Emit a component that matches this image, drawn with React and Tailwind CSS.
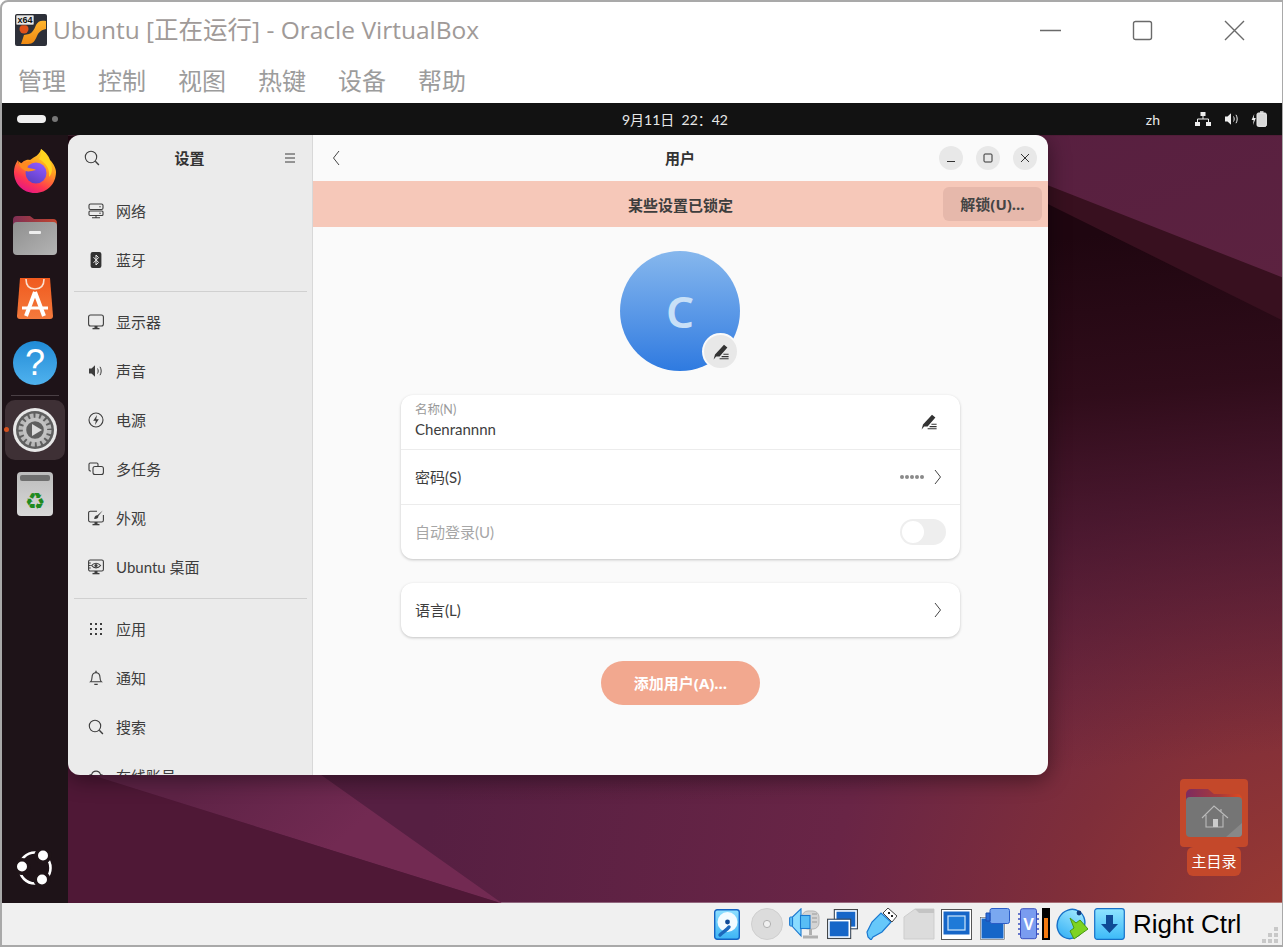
import React from 'react';

const ui = "font-['Lato','Noto_Sans_CJK_SC',sans-serif]";
const strong = "font-['Noto_Sans','Noto_Sans_CJK_SC',sans-serif]";

// gnome style symbolic icons, 16x16
const Sym = ({ children, className = '' }) => (
  <svg viewBox="0 0 16 16" fill="none" stroke="#3d3d3d" strokeWidth="1.1" className={`w-4 h-4 shrink-0 ${className}`}>
    {children}
  </svg>
);

const NetworkIcon = () => (
  <Sym>
    <rect x="1" y="1" width="14" height="5.5" rx="1.5" />
    <rect x="1" y="8" width="14" height="4.5" rx="1" />
    <path d="M8 12.5v2M4 14.8h8" />
    <circle cx="12" cy="3.8" r=".7" fill="#3d3d3d" stroke="none" />
    <circle cx="12" cy="10.2" r=".7" fill="#3d3d3d" stroke="none" />
  </Sym>
);
const BluetoothIcon = () => (
  <Sym>
    <rect x="2.6" y="0" width="10.8" height="16" rx="2" fill="#333" stroke="none" />
    <path d="M5.5 5.2 10.5 10.4 8 13V3l2.5 2.6L5.5 10.8" stroke="#eee" strokeWidth="1" />
  </Sym>
);
const DisplayIcon = () => (
  <Sym>
    <rect x=".6" y="1" width="14.8" height="11" rx="2" />
    <path d="M4.5 14.6h7" strokeWidth="1.4" />
    <path d="M6.5 12h3v2h-3z" fill="#3d3d3d" stroke="none" />
  </Sym>
);
const SoundIcon = ({ color = '#3d3d3d' }) => (
  <svg viewBox="0 0 16 16" fill="none" stroke={color} className="w-4 h-4 shrink-0">
    <path d="M1 5.5h2.5L7 2.2v11.6L3.5 10.5H1z" fill={color} stroke="none" />
    <path d="M9.5 5.5c.9 1.5.9 3.5 0 5M12 3.8c1.6 2.5 1.6 5.9 0 8.4" strokeWidth="1" />
  </svg>
);
const PowerIcon = () => (
  <Sym>
    <circle cx="8" cy="8" r="7" />
    <path d="M9 3 5.2 8.8h2.6L7 13l3.8-5.8H8.2z" fill="#3d3d3d" stroke="none" />
  </Sym>
);
const MultitaskIcon = () => (
  <Sym>
    <path d="M3 10H2.2A1.2 1.2 0 0 1 1 8.8V3.2A1.2 1.2 0 0 1 2.2 2h6.6A1.2 1.2 0 0 1 10 3.2V5" />
    <rect x="5" y="5.5" width="10.4" height="8" rx="2" />
  </Sym>
);
const AppearanceIcon = () => (
  <Sym>
    <path d="M9 1.2H2.4A1.8 1.8 0 0 0 .6 3v7.2A1.8 1.8 0 0 0 2.4 12h11.2a1.8 1.8 0 0 0 1.8-1.8V5" />
    <path d="M4.5 14.6h7" strokeWidth="1.4" />
    <path d="M6.5 12h3v2h-3z" fill="#3d3d3d" stroke="none" />
    <path d="M14.8.6 9.4 5.2c-1.6-.2-3 .9-3.2 3.8 2.6.2 4.4-1 4.2-3z" fill="#3d3d3d" stroke="none" />
  </Sym>
);
const DesktopIcon = () => (
  <Sym>
    <rect x=".6" y="1" width="14.8" height="11" rx="1.6" />
    <path d="M4.5 14.6h7" strokeWidth="1.4" />
    <path d="M6.5 12h3v2h-3z" fill="#3d3d3d" stroke="none" />
    <path d="M3.6 6.5C6 3.4 10 3.4 12.6 6.5 10 9.6 6 9.6 3.6 6.5z" />
    <circle cx="8" cy="6.5" r="1.6" fill="#3d3d3d" stroke="none" />
    <path d="M.8 4h2M.8 6.5h2M.8 9h2" />
  </Sym>
);
const AppsIcon = () => (
  <Sym>
    {[3, 8, 13].map(y => [3, 8, 13].map(x => (
      <rect key={`${x}-${y}`} x={x - 1} y={y - 1} width="2" height="2" fill="#3d3d3d" stroke="none" />
    )))}
  </Sym>
);
const BellIcon = () => (
  <Sym>
    <path d="M2.5 11.8h11c-1.2-1-1.5-2-1.5-4.3C12 4.6 10.4 2.6 8 2.6S4 4.6 4 7.5c0 2.3-.3 3.3-1.5 4.3z" />
    <path d="M8 .8v1.8M6.3 14.4h3.4" strokeWidth="1.3" />
  </Sym>
);
const SearchIcon = () => (
  <Sym>
    <circle cx="7" cy="7" r="5.7" />
    <path d="m11.3 11.3 3.6 3.6" strokeWidth="1.4" />
  </Sym>
);
const CloudIcon = () => (
  <Sym>
    <path d="M4 13a3.2 3.2 0 0 1-.4-6.4 4.6 4.6 0 0 1 8.9 0A3.2 3.2 0 0 1 12 13z" />
  </Sym>
);
const EditIcon = () => (
  <svg viewBox="0 0 16 16" className="w-4 h-4">
    <path d="M11 .8 14.4 3.6 6.6 12.4H3.2L.6 15.4 2 10.4z" fill="#333" />
    <path d="M8.6 12.6h7M10.4 10.2h5.2M6.6 14.8h9" stroke="#333" strokeWidth="1.1" />
  </svg>
);
const Chevron = () => (
  <svg viewBox="0 0 8 16" fill="none" stroke="#444" strokeWidth="1" className="w-2 h-4">
    <path d="M1 1l5.5 7L1 15" />
  </svg>
);

const VBoxLogo = () => (
  <svg viewBox="0 0 32 32" className="w-8 h-8 shrink-0">
    <defs>
      <linearGradient id="vbo" x1="0" y1="0" x2="0" y2="1">
        <stop offset="0" stopColor="#ffb52e" />
        <stop offset="1" stopColor="#f08a12" />
      </linearGradient>
    </defs>
    <rect width="32" height="32" rx="2" fill="#2d3039" />
    <path d="M31 7c-5-1-8 0-10 4-2 5-4 8-7 9l-5 1-3 9h7c5 0 7-3 9-8 1-3 4-6 9-7z" fill="url(#vbo)" />
    <circle cx="9" cy="15" r="4.5" fill="#e0521a" />
    <rect x="1" y="1" width="18" height="10" rx="1" fill="#e8e8e8" stroke="#222" strokeWidth=".6" />
    <text x="10" y="9" textAnchor="middle" fontSize="9" fontWeight="700" fontFamily="Liberation Sans" fill="#111">x64</text>
  </svg>
);

const Firefox = () => (
  <svg viewBox="0 0 44 44" className="w-11 h-11">
    <defs>
      <linearGradient id="ffa" x1=".8" y1="0" x2=".3" y2="1">
        <stop offset="0" stopColor="#ffe226" />
        <stop offset=".4" stopColor="#ff9b21" />
        <stop offset=".75" stopColor="#ff3750" />
        <stop offset="1" stopColor="#e31587" />
      </linearGradient>
      <linearGradient id="ffb" x1=".7" y1="0" x2=".2" y2="1">
        <stop offset="0" stopColor="#9059ff" />
        <stop offset="1" stopColor="#5b3ec0" />
      </linearGradient>
    </defs>
    <path d="M28 0c6 4 8 8 9 11 4 4 6 9 6 12 0 12-9 21-21 21S1 35 1 23c0-4 1-8 4-12 0 3 1 4 2 5 2-3 6-6 10-5 4-3 10-5 11-11z" fill="url(#ffa)" />
    <circle cx="23" cy="24" r="10.5" fill="url(#ffb)" />
    <path d="M5 12c3 2 4 3 5 3 3-3 7-3 10-1-3 0-6 2-6 4 2 2 7 1 9 3-4 1-8 2-10 1-3-1-7-4-8-10z" fill="#ff8a1f" />
    <path d="M28 0c5 5 11 12 11 20 0 3-1 6-3 8 1-8-3-14-10-18 2-3 3-7 2-10z" fill="#ffd51f" />
  </svg>
);
const Files = () => (
  <svg viewBox="0 0 44 42" className="w-11 h-[42px]">
    <defs>
      <linearGradient id="fla" x1="0" y1="0" x2="1" y2="0">
        <stop offset="0" stopColor="#7f2f55" />
        <stop offset="1" stopColor="#c2452e" />
      </linearGradient>
      <linearGradient id="flb" x1="0" y1="0" x2="1" y2="1">
        <stop offset="0" stopColor="#8f8f8f" />
        <stop offset="1" stopColor="#b4b4b4" />
      </linearGradient>
    </defs>
    <path d="M0 6a4 4 0 0 1 4-4h13l4 3h19a4 4 0 0 1 4 4v10H0z" fill="url(#fla)" />
    <rect y="8" width="44" height="33" rx="4" fill="url(#flb)" />
    <rect x="16" y="17" width="12" height="3" rx="1" fill="#eee" />
  </svg>
);
const AppStore = () => (
  <svg viewBox="0 0 36 42" className="w-9 h-[42px]">
    <defs>
      <linearGradient id="asa" x1="0" y1="0" x2="0" y2="1">
        <stop offset="0" stopColor="#f05a1e" />
        <stop offset="1" stopColor="#f47a3d" />
      </linearGradient>
    </defs>
    <path d="M3 0h30l3 38a3 3 0 0 1-3 3H3a3 3 0 0 1-3-3z" fill="url(#asa)" />
    <path d="M9 1c0 6 3 10 9 10s9-4 9-10" fill="none" stroke="#fbe0d0" strokeWidth="1.6" />
    <path d="M18 14 9 38M18 14l9 24" stroke="#fff" strokeWidth="4" fill="none" />
    <path d="M5 30h26" stroke="#fff" strokeWidth="3" />
  </svg>
);
const Help = () => (
  <div className="relative w-[44px] h-[44px] rounded-full bg-gradient-to-b from-[#1f8bd6] to-[#4fb2ee] flex items-center justify-center">
    <span className="text-[36px] leading-none text-white font-['Liberation_Sans',sans-serif]">?</span>
  </div>
);
const Gear = () => (
  <svg viewBox="0 0 44 44" className="w-11 h-11">
    <circle cx="22" cy="22" r="22" fill="#e8e8e8" />
    <circle cx="22" cy="22" r="19" fill="#5f5f5f" />
    <circle cx="22" cy="22" r="14" fill="none" stroke="#b8b8b8" strokeWidth="5" strokeDasharray="3.6 1.9" />
    <circle cx="22" cy="22" r="10.5" fill="none" stroke="#c2c2c2" strokeWidth="3.4" />
    <circle cx="22" cy="22" r="7" fill="#5f5f5f" />
    <path d="M19 16v12l10-6z" fill="#dcdcdc" />
  </svg>
);
const Trash = () => (
  <svg viewBox="0 0 36 44" className="w-9 h-11">
    <defs>
      <linearGradient id="tra" x1="0" y1="0" x2="0" y2="1">
        <stop offset="0" stopColor="#bcbcbc" />
        <stop offset="1" stopColor="#d8d8d8" />
      </linearGradient>
    </defs>
    <rect width="36" height="44" rx="4" fill="url(#tra)" />
    <rect x="3" y="3" width="30" height="6" rx="2" fill="#6f6f6f" />
    <text x="18" y="37" textAnchor="middle" fontSize="23" fontFamily="DejaVu Sans" fill="#1f8a1f">♻</text>
  </svg>
);
const UbuntuLogo = () => (
  <svg viewBox="0 0 36 36" className="w-9 h-9">
    <circle cx="18" cy="18" r="15.5" fill="none" stroke="#fff" strokeWidth="2.6" />
    <g stroke="#1f1418" strokeWidth="7" fill="#fff">
      <circle cx="26" cy="5.5" r="5" />
      <circle cx="5" cy="16.5" r="5" />
      <circle cx="25" cy="29.5" r="5" />
    </g>
    <g fill="#fff">
      <circle cx="26" cy="5.5" r="5" />
      <circle cx="5" cy="16.5" r="5" />
      <circle cx="25" cy="29.5" r="5" />
    </g>
  </svg>
);

const HomeFolder = () => (
  <svg viewBox="0 0 56 50" className="w-14 h-[50px]">
    <defs>
      <linearGradient id="hfa" x1="0" y1="0" x2="1" y2="0">
        <stop offset="0" stopColor="#7d2c60" />
        <stop offset=".6" stopColor="#a83a3a" />
        <stop offset="1" stopColor="#e04a1e" />
      </linearGradient>
    </defs>
    <path d="M0 6a5 5 0 0 1 5-5h17l6 5h23a5 5 0 0 1 5 5v14H0z" fill="url(#hfa)" />
    <rect y="9" width="56" height="40" rx="4" fill="#757575" />
    <path d="M40 49l16-14v10a4 4 0 0 1-4 4z" fill="#888" />
    <path d="M16 30 28 18l14 12M20 27v12h17V27M35 21v3" fill="none" stroke="#bbb" strokeWidth="1.1" />
    <rect x="27" y="31" width="5" height="8" fill="#ccc" />
  </svg>
);

// virtualbox status bar icons
const blue = { a: '#8fe0ff', b: '#3cb4f5', e: '#1464c4' };
const HddIcon = () => (
  <svg viewBox="0 0 26 31" className="w-[26px] h-[31px]">
    <defs>
      <linearGradient id="sga" x1="0" y1="0" x2="0" y2="1">
        <stop offset="0" stopColor={blue.a} />
        <stop offset="1" stopColor={blue.b} />
      </linearGradient>
    </defs>
    <rect x=".7" y=".7" width="24.6" height="29.6" rx="2.5" fill="url(#sga)" stroke={blue.e} strokeWidth="1.4" />
    <circle cx="13.5" cy="13" r="10" fill="#f2fbff" />
    <circle cx="13.5" cy="13" r="2.4" fill="#0f4a96" />
    <path d="M15 18c-2 3-6 5-9 8" stroke="#1c68bc" strokeWidth="3.4" strokeLinecap="round" fill="none" />
  </svg>
);
const CdIcon = () => (
  <svg viewBox="0 0 32 32" className="w-[32px] h-[32px]">
    <circle cx="16" cy="16" r="15.5" fill="#dcdcdc" stroke="#cfcfcf" />
    <circle cx="16" cy="16" r="3.6" fill="#f0f0f0" stroke="#b0b0b0" />
  </svg>
);
const AudioIcon = () => (
  <svg viewBox="0 0 32 32" className="w-[32px] h-[32px]">
    <rect x="13" y="3" width="17" height="18" rx="6" fill="#d4d4d4" stroke="#b5b5b5" />
    <path d="M23 6h5M23 10h5M23 14h5" stroke="#9a9a9a" />
    <path d="M21.5 21v6M14 29h15" stroke="#b0b0b0" strokeWidth="3" />
    <path d="M3 9.5 12 .8v27L3 18z" fill="#8adcff" stroke="#1a78d0" strokeWidth="1.1" />
    <rect x=".6" y="9" width="3" height="9" rx="1" fill="#5cbdf5" stroke="#1a78d0" strokeWidth="1" />
    <rect x="11.5" y="7.5" width="9.5" height="13" fill="#58bdf5" stroke="#1a78d0" strokeWidth="1.1" />
  </svg>
);
const ScreensIcon = () => (
  <svg viewBox="0 0 32 32" className="w-[31px] h-[31px]">
    <rect x="7.5" y=".5" width="24" height="20" fill="#1666c8" stroke="#444" />
    <rect x="9" y="2" width="21" height="17" fill="none" stroke="#fff" strokeWidth="1.6" />
    <rect x=".5" y="10.5" width="24" height="20" fill="#1666c8" stroke="#444" />
    <rect x="2" y="12" width="21" height="17" fill="none" stroke="#fff" strokeWidth="1.6" />
  </svg>
);
const UsbIcon = () => (
  <svg viewBox="0 0 33 32" className="w-[33px] h-[32px]">
    <path d="M3 24 8 14 17 5l10 9-9 10-9 5-2 3-3-3z" fill="#66c8fa" stroke="#1a78d0" strokeWidth="1.2" />
    <path d="M19 5l5-5 9 8-5 6z" fill="#fff" stroke="#444" />
    <rect x="24" y="4" width="2" height="2" fill="#222" />
    <rect x="27" y="7" width="2" height="2" fill="#222" />
  </svg>
);
const FolderIcon = () => (
  <svg viewBox="0 0 32 32" className="w-[32px] h-[32px]">
    <path d="M1 9 12 1h19v30H1z" fill="#dcdcdc" stroke="#cdcdcd" />
    <path d="M12 1h19v4H16z" fill="#c4c4c4" />
  </svg>
);
const ScreenIcon = () => (
  <svg viewBox="0 0 31 31" className="w-[31px] h-[31px]">
    <rect x=".5" y=".5" width="30" height="30" fill="#fff" stroke="#555" />
    <rect x="2.5" y="2.5" width="26" height="23" fill="#1666c8" />
    <rect x="7" y="7" width="17" height="14" fill="#1f7ad8" stroke="#cfe6fb" strokeWidth="1.2" />
  </svg>
);
const CaptureIcon = () => (
  <svg viewBox="0 0 30 32" className="w-[30px] h-[32px]">
    <rect x=".5" y="9.5" width="24" height="22" fill="#1666c8" stroke="#fff" strokeWidth="2" />
    <rect x=".5" y="9.5" width="24" height="22" fill="none" stroke="#555" strokeWidth=".6" />
    <rect x="10" y=".5" width="19.5" height="15" rx="2" fill="#7aa8f0" stroke="#2a5cc8" />
    <path d="M10 5H6v8h4z" fill="#2a6cd8" stroke="#1a4cb0" />
  </svg>
);
const ChipIcon = () => (
  <svg viewBox="0 0 21 32" className="w-[21px] h-[32px]">
    <rect x="2.5" y=".7" width="16" height="30" rx="2" fill="#7a9cf0" stroke="#3a50c0" />
    <path d="M0 6h3M0 11h3M0 16h3M0 21h3M0 26h3M18 6h3M18 11h3M18 16h3M18 21h3M18 26h3" stroke="#3a50c0" strokeWidth="1.4" />
    <text x="10.5" y="22" textAnchor="middle" fontSize="16" fontWeight="700" fontFamily="Liberation Sans" fill="#fff">V</text>
  </svg>
);
const GlobeIcon = () => (
  <svg viewBox="0 0 32 32" className="w-[32px] h-[32px]">
    <defs>
      <linearGradient id="sgb" x1="0" y1="0" x2="0" y2="1">
        <stop offset="0" stopColor="#9ce6ff" />
        <stop offset="1" stopColor="#3cb4f5" />
      </linearGradient>
    </defs>
    <ellipse cx="15" cy="16" rx="13.5" ry="15" transform="rotate(30 15 16)" fill="url(#sgb)" stroke="#1670c8" strokeWidth="1.4" />
    <circle cx="23" cy="5" r="2.4" fill="#123a7a" />
    <path d="M14 10l6 5 4-3 8 9-14 10-4-8 4-3z" fill="#7ed321" stroke="#4a9a10" />
  </svg>
);
const DownIcon = () => (
  <svg viewBox="0 0 31 32" className="w-[31px] h-[32px]">
    <defs>
      <linearGradient id="sgc" x1="0" y1="0" x2="0" y2="1">
        <stop offset="0" stopColor="#8fe4ff" />
        <stop offset="1" stopColor="#3dbaf8" />
      </linearGradient>
    </defs>
    <rect x=".7" y=".7" width="29.6" height="30.6" rx="2.5" fill="url(#sgc)" stroke="#1670c8" strokeWidth="1.2" />
    <path d="M12 7h7v9h5l-8.5 9L7 16h5z" fill="#0f4a96" />
  </svg>
);
const Grip = () => (
  <svg viewBox="0 0 20 20" className="w-5 h-5" fill="#c8c8c8">
    <rect x="14" y="2" width="4" height="4" />
    <rect x="8" y="8" width="4" height="4" />
    <rect x="14" y="8" width="4" height="4" />
    <rect x="2" y="14" width="4" height="4" />
    <rect x="8" y="14" width="4" height="4" />
    <rect x="14" y="14" width="4" height="4" />
  </svg>
);

const Wallpaper = () => (
  <svg viewBox="68 135 1215 768" className="absolute inset-0 w-full h-full">
    <defs>
      <radialGradient id="wpa" gradientUnits="userSpaceOnUse" cx="1320" cy="960" r="900">
        <stop offset="0" stopColor="#a03c30" />
        <stop offset=".3" stopColor="#7f2e3a" />
        <stop offset=".55" stopColor="#692546" />
        <stop offset="1" stopColor="#561f42" />
      </radialGradient>
      <linearGradient id="wpb" gradientUnits="userSpaceOnUse" x1="1150" y1="230" x2="1200" y2="760">
        <stop offset="0" stopColor="#1f0610" />
        <stop offset=".3" stopColor="#2d0b18" stopOpacity=".95" />
        <stop offset="1" stopColor="#4a1830" stopOpacity="0" />
      </linearGradient>
      <linearGradient id="wpc" x1="0" y1="0" x2="1" y2="1">
        <stop offset="0" stopColor="#571f40" />
        <stop offset="1" stopColor="#5c2240" />
      </linearGradient>
      <linearGradient id="wpd" gradientUnits="userSpaceOnUse" x1="200" y1="775" x2="300" y2="880">
        <stop offset="0" stopColor="#5e2346" />
        <stop offset="1" stopColor="#722a52" />
      </linearGradient>
    </defs>
    <rect x="68" y="135" width="1215" height="768" fill="url(#wpa)" />
    <path d="M68 135H1283V800H68z" fill="url(#wpb)" />
    <path d="M900 135H1283V320L900 130z" fill="#38101f" />
    <path d="M900 135H1283V277L921 135z" fill="url(#wpc)" />
    <path d="M68 768 503 904 321 775H68z" fill="url(#wpd)" />
    <path d="M68 768 503 904H68z" fill="#4f1836" />
  </svg>
);

const navGroups = [
  [
    { label: '网络', Icon: NetworkIcon },
    { label: '蓝牙', Icon: BluetoothIcon },
  ],
  [
    { label: '显示器', Icon: DisplayIcon },
    { label: '声音', Icon: SoundIcon },
    { label: '电源', Icon: PowerIcon },
    { label: '多任务', Icon: MultitaskIcon },
    { label: '外观', Icon: AppearanceIcon },
    { label: 'Ubuntu 桌面', Icon: DesktopIcon },
  ],
  [
    { label: '应用', Icon: AppsIcon },
    { label: '通知', Icon: BellIcon },
    { label: '搜索', Icon: SearchIcon },
    { label: '在线账号', Icon: CloudIcon },
  ],
];

const Sidebar = () => (
  <aside className="w-[245px] shrink-0 bg-[#ebebeb] border-r border-[#d8d8d8] flex flex-col overflow-hidden">
    <div className="h-[46px] shrink-0 flex items-center justify-between pl-[16px] pr-[16px]">
      <SearchIcon />
      <span className="text-[15px] font-bold text-[#333] ml-[-5px]">设置</span>
      <svg viewBox="0 0 12 12" className="w-3 h-3" stroke="#3d3d3d" strokeWidth="1">
        <path d="M1 2h10M1 6h10M1 10h10" />
      </svg>
    </div>
    <div className="flex flex-col shrink-0 mt-[5.5px]">
      {navGroups.map((group, i) => (
        <div key={i}>
          {i > 0 && <div className="h-px bg-[#d0d0d0] ml-[6px] mr-[5px] my-[6px]" />}
          {group.map(({ label, Icon }) => (
            <div key={label} className="h-[49px] flex items-center gap-3 pl-5 text-[15px] text-[#3d3d3d]">
              <Icon />
              <span>{label}</span>
            </div>
          ))}
        </div>
      ))}
    </div>
  </aside>
);

const WinBtn = ({ children }) => (
  <div className="w-6 h-6 rounded-full bg-[#e8e8e8] flex items-center justify-center">{children}</div>
);

const UserPanel = () => (
  <main className="flex-1 bg-[#fafafa] flex flex-col">
    <header className="h-[46px] shrink-0 flex items-center relative pl-[19px] pr-[11px]">
      <svg viewBox="0 0 8 16" fill="none" stroke="#444" strokeWidth="1" className="w-2 h-4 rotate-180">
        <path d="M1 1l5.5 7L1 15" />
      </svg>
      <span className="absolute left-0 right-0 text-center text-[15px] font-bold text-[#333] pr-px">用户</span>
      <div className="ml-auto flex gap-[13px] relative">
        <WinBtn>
          <svg viewBox="0 0 10 10" className="w-2.5 h-2.5" stroke="#333"><path d="M1 8.5h8" /></svg>
        </WinBtn>
        <WinBtn>
          <svg viewBox="0 0 10 10" className="w-2.5 h-2.5" fill="none" stroke="#333"><rect x="1" y="1" width="8" height="8" rx="1" /></svg>
        </WinBtn>
        <WinBtn>
          <svg viewBox="0 0 10 10" className="w-2.5 h-2.5" stroke="#333"><path d="M1 1l8 8M9 1l-8 8" /></svg>
        </WinBtn>
      </div>
    </header>
    <div className="h-[46px] shrink-0 bg-[#f6c8b9] flex items-center relative pr-[6px]">
      <span className="absolute left-0 right-0 text-center text-[15px] font-bold text-[#3d3d3d] pt-[2px]">某些设置已锁定</span>
      <div className={`ml-auto relative w-[99px] h-[34px] rounded-md bg-[#e6b8ab] flex items-center justify-center text-[15px] font-bold text-[#444] ${strong}`}>解锁(U)…</div>
    </div>

    <div className="flex flex-col items-center pt-6">
      <div className="relative w-[120px] h-[120px] -ml-px rounded-full bg-gradient-to-b from-[#86b7ed] to-[#2e7ae0] flex items-center justify-center">
        <span className={`text-[44px] font-semibold text-[#c8e0f7] leading-none ${strong}`}>C</span>
        <div className="absolute left-[82px] top-[82px] w-[37px] h-[37px] rounded-full bg-[#e8e8e8] border-2 border-[#fafafa] flex items-center justify-center">
          <EditIcon />
        </div>
      </div>

      <div className="w-[559px] mt-6 rounded-xl bg-white shadow-[0_1px_3px_rgba(0,0,0,.22)] divide-y divide-[#ececec] text-[15px] text-[#3d3d3d]">
        <div className="h-[55px] flex items-center justify-between px-[14px]">
          <div className="flex flex-col">
            <span className="text-[12.5px] leading-[16px] text-[#9a9a9a] mt-[-3px]">名称(N)</span>
            <span className="leading-[20px] mt-[1px]">Chenrannnn</span>
          </div>
          <div className="mr-[9px]"><EditIcon /></div>
        </div>
        <div className="h-[55px] flex items-center px-[14px]">
          <span>密码(S)</span>
          <span className="ml-auto flex gap-[1px] mr-[10px]">
            {[0, 1, 2, 3, 4].map(i => <i key={i} className="w-1 h-1 rounded-full bg-[#8a8a8a]" />)}
          </span>
          <div className="mr-[4px]"><Chevron /></div>
        </div>
        <div className="h-[54px] flex items-center justify-between pl-[14px] pr-[14px] text-[#a6a6a6]">
          <span>自动登录(U)</span>
          <div className="w-[46px] h-[26px] rounded-full bg-[#eeeeee] p-[2px]">
            <div className="w-[22px] h-[22px] rounded-full bg-white" />
          </div>
        </div>
      </div>

      <div className="w-[559px] mt-6 h-[54px] rounded-xl bg-white shadow-[0_1px_3px_rgba(0,0,0,.22)] flex items-center justify-between pl-[14px] pr-[18px] text-[15px] text-[#3d3d3d]">
        <span>语言(L)</span>
        <Chevron />
      </div>

      <div className={`mt-6 w-[159px] h-[44px] rounded-full bg-[#f2a88f] flex items-center justify-center text-[15px] font-bold text-white ${strong}`}>添加用户(A)…</div>
    </div>
  </main>
);

const Dock = () => (
  <nav className="w-[66px] shrink-0 bg-[#1e1318] flex flex-col items-center pt-[4px] relative">
    <div className="h-16 flex items-center justify-center"><Firefox /></div>
    <div className="h-16 flex items-center justify-center"><Files /></div>
    <div className="h-16 flex items-center justify-center"><AppStore /></div>
    <div className="h-16 flex items-center justify-center"><Help /></div>
    <div className="w-[48px] h-px bg-[#4a4045]" />
    <div className="relative mt-[4px] w-[60px] h-[60px] rounded-[10px] bg-[#3e3035] flex items-center justify-center">
      <Gear />
      <span className="absolute left-[-1px] top-[27px] w-[5px] h-[5px] rounded-full bg-[#d2501e]" />
    </div>
    <div className="h-16 flex items-center justify-center mt-[2px]"><Trash /></div>
    <div className="mt-auto mb-[17px]"><UbuntuLogo /></div>
  </nav>
);

const menu = ['管理', '控制', '视图', '热键', '设备', '帮助'];

export default function App() {
  return (
    <div className={`w-[1283px] h-[947px] bg-white border-2 border-r border-[#a9a9a9] rounded-tl-lg overflow-hidden flex flex-col ${ui}`}>
      <div className="h-[58px] shrink-0 flex items-center pl-[13px] pr-[37px] pb-[2px]">
        <VBoxLogo />
        <span className="ml-[6px] text-[24.5px] text-[#a09a98] font-['Open_Sans','Noto_Sans_CJK_SC',sans-serif]">Ubuntu [正在运行] - Oracle VirtualBox</span>
        <div className="ml-auto flex items-center gap-[71px]">
          <svg viewBox="0 0 21 21" className="w-[21px] h-[21px]" stroke="#6a6a6a" strokeWidth="1.4"><path d="M0 10.5h21" /></svg>
          <svg viewBox="0 0 21 21" className="w-[21px] h-[21px]" fill="none" stroke="#6a6a6a" strokeWidth="1.4"><rect x="1.5" y="1.5" width="18" height="18" rx="2" /></svg>
          <svg viewBox="0 0 21 21" className="w-[21px] h-[21px]" stroke="#6a6a6a" strokeWidth="1.4"><path d="M1 1l19 19M20 1 1 20" /></svg>
        </div>
      </div>
      <div className="h-[43px] shrink-0 flex items-center gap-8 pl-4 pb-[4px] text-[24px] text-[#9c9c9c] font-['Noto_Sans_CJK_SC',sans-serif]">
        {menu.map(m => <span key={m}>{m}</span>)}
      </div>

      <div className="h-8 shrink-0 bg-[#121212] flex items-center relative pl-[15px] pr-[15px] text-[14px] text-[#e8e8e8]">
        <span className="w-[29px] h-2 rounded-full bg-[#f0f0f0]" />
        <span className="ml-[6px] w-1.5 h-1.5 rounded-full bg-[#777]" />
        <span className="absolute left-[66px] right-0 text-center">9月11日&nbsp;&nbsp;22：42</span>
        <div className="ml-auto flex items-center relative">
          <span className="mr-[35px]">zh</span>
          <svg viewBox="0 0 16 16" className="w-4 h-4 mr-[13px]" fill="#eee" stroke="#eee">
            <rect x="5.5" y="1" width="5" height="4" stroke="none" />
            <rect x="0" y="11" width="5" height="4" stroke="none" />
            <rect x="11" y="11" width="5" height="4" stroke="none" />
            <path d="M8 5v3M2.5 11V8h11v3" fill="none" />
          </svg>
          <SoundIcon color="#eee" />
          <svg viewBox="0 0 16 16" className="w-4 h-4 ml-[11px]" fill="none" stroke="#eee">
            <path d="M3.2 3 .6 9h2L2 14l2.8-7h-2z" fill="#eee" stroke="none" />
            <rect x="6" y="2" width="9.4" height="13.4" rx="1.5" fill="#d8d8d8" />
            <path d="M9 1h3.5" strokeWidth="1.5" />
          </svg>
        </div>
      </div>

      <div className="flex-1 flex min-h-0">
        <Dock />
        <div className="flex-1 relative overflow-hidden">
          <Wallpaper />
          <div className="absolute left-0 top-0 w-[980px] h-[640px] rounded-xl overflow-hidden flex shadow-[0_4px_22px_rgba(0,0,0,.45)]">
            <Sidebar />
            <UserPanel />
          </div>
          <div className="absolute left-[1112px] top-[644px] w-[68px] flex flex-col items-center">
            <div className="w-[68px] h-[68px] rounded bg-[#c4482a] flex items-center justify-center"><HomeFolder /></div>
            <div className="px-[4px] h-[29px] rounded-md bg-[#c4482a] flex items-center text-[15px] text-white font-['Noto_Sans_CJK_SC',sans-serif]">主目录</div>
          </div>
        </div>
      </div>

      <footer className="h-[42px] shrink-0 bg-[#f0f0f0] flex items-center relative">
        <div className="ml-[712px] flex items-center">
          <HddIcon />
          <div className="ml-[11px]"><CdIcon /></div>
          <div className="ml-[6px]"><AudioIcon /></div>
          <div className="ml-[6px]"><ScreensIcon /></div>
          <div className="ml-[6px]"><UsbIcon /></div>
          <div className="ml-[6px]"><FolderIcon /></div>
          <div className="ml-[6px]"><ScreenIcon /></div>
          <div className="ml-[8px]"><CaptureIcon /></div>
          <div className="ml-[8px]"><ChipIcon /></div>
          <div className="ml-[3px] w-2 h-[32px] bg-black flex items-end justify-center pb-[2px]">
            <div className="w-1 h-[20px] bg-[#f47a10]" />
          </div>
          <div className="ml-[6px]"><GlobeIcon /></div>
          <div className="ml-[6px]"><DownIcon /></div>
          <span className="ml-[8px] text-[26px] text-black font-['Liberation_Sans',sans-serif]">Right Ctrl</span>
        </div>
        <div className="absolute right-[2px] bottom-0"><Grip /></div>
      </footer>
    </div>
  );
}
